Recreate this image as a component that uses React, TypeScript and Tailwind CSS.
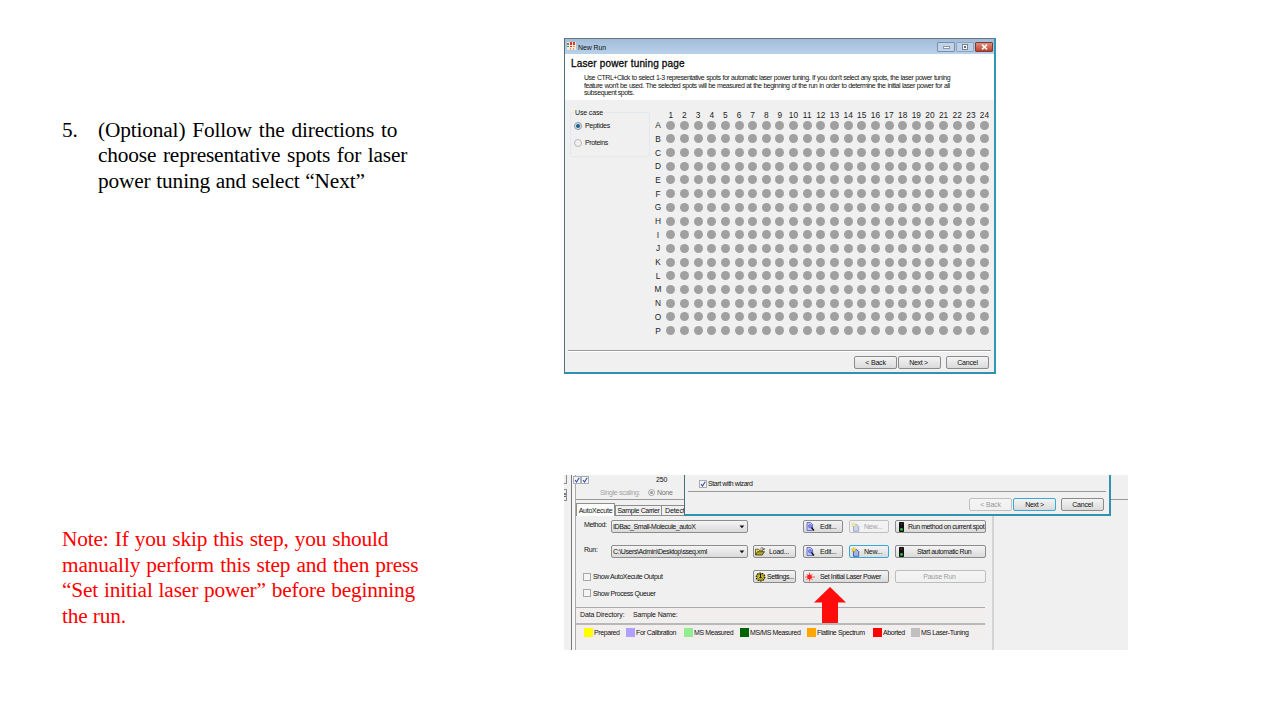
import type { ReactNode } from "react";

const columns = Array.from({ length: 24 }, (_, i) => i + 1);
const rows = "ABCDEFGHIJKLMNOP".split("");

function Line({ children, className = "" }: { children: ReactNode; className?: string }) {
  return <div className={`h-[25.6px] whitespace-nowrap leading-[25.6px] ${className}`}>{children}</div>;
}

function Btn({ children, className = "" }: { children?: ReactNode; className?: string }) {
  return (
    <div
      className={`flex h-[13px] shrink-0 items-center justify-center overflow-hidden whitespace-nowrap rounded-[2px] border bg-gradient-to-b from-[#f4f4f4] to-[#dadada] [&_svg]:shrink-0 ${className}`}
    >
      {children}
    </div>
  );
}

function AppIcon() {
  return (
    <svg width="9" height="8" viewBox="0 0 9 8" shapeRendering="crispEdges">
      <rect width="9" height="8" fill="#f3ead9" />
      <path d="M0 1h2v2H0zM0 4h2v1H0z" fill="#5e8a55" />
      <path d="M3 0h2v3H3zM6 0h2v3H6zM3 4h2v1H3z" fill="#d8362c" />
      <path d="M6 4h2v1H6zM3 6h1v2H3zM6 6h1v2H6z" fill="#d79c76" />
    </svg>
  );
}

function Magnifier() {
  return (
    <svg width="9" height="9" viewBox="0 0 9 9">
      <path d="M1 .5h3.600l2 2v6H1z" fill="#c3c8ff" stroke="#5a5ab8" strokeWidth=".8" />
      <circle cx="4.200" cy="4.200" r="1.700" fill="#8794f2" stroke="#4a55b8" strokeWidth=".6" />
      <path d="M5.400 5.500 8 8.500" stroke="#111" strokeWidth="1.400" />
    </svg>
  );
}

function NewDoc() {
  return (
    <svg width="9" height="10" viewBox="0 0 9 10">
      <path d="M2.500 2.500h3.200l2 2v4.800H2.500z" fill="#a3b3ea" stroke="#34449a" strokeWidth=".8" />
      <path d="m2.700 0 .7 1.700 1.900.3-1.400 1.200.4 1.900-1.600-1-1.600 1 .4-1.900L0 2l2-.3z" fill="#f3df27" stroke="#a89e28" strokeWidth=".3" />
    </svg>
  );
}

function Folder() {
  return (
    <svg width="10" height="9" viewBox="0 0 10 9">
      <path d="M.5 8V2.200h2.800l.8 1h3.400v1.600" fill="#e8dc50" stroke="#4b4715" strokeWidth=".8" />
      <path d="M.5 8 2.500 4.700h7L7.200 8z" fill="#b8a62c" stroke="#37340e" strokeWidth=".8" />
      <path d="M5.500 1.400c1.400-1.200 2.600-.6 3 .8M9.200 1v1.600H7.600" fill="none" stroke="#222" strokeWidth=".7" />
    </svg>
  );
}

function Gear() {
  return (
    <svg width="11" height="10" viewBox="0 0 11 10">
      <ellipse cx="5.500" cy="5" rx="4.300" ry="3.900" fill="#d5c72c" stroke="#23220f" strokeWidth="1.200" strokeDasharray="1.700 .8" />
      <circle cx="5.500" cy="5" r="2.900" fill="#d8cc30" stroke="#5b5518" strokeWidth=".6" />
      <path d="M5.500 1.800v3.600M4.200 5.700h2.600" stroke="#111" strokeWidth="1.100" />
    </svg>
  );
}

function Burst() {
  return (
    <svg width="11" height="10" viewBox="0 0 11 10">
      <path d="M4.500 .5v9M0 5h10M1.500 2l6 6M7.500 2l-6 6" stroke="#ff5c5c" strokeWidth="1" />
      <circle cx="4.500" cy="5" r="2.400" fill="#ff2020" />
    </svg>
  );
}

function Light() {
  return (
    <svg width="5" height="10" viewBox="0 0 5 10">
      <rect width="5" height="10" rx=".7" fill="#111" />
      <circle cx="2.500" cy="2" r="1" fill="#5a2a2a" />
      <circle cx="2.500" cy="7.400" r="1.400" fill="#27c43d" />
    </svg>
  );
}

function Tick() {
  return (
    <div className="flex size-[8px] shrink-0 items-center justify-center border border-[#a9adb2] bg-[#f5f8fb]">
      <svg width="6" height="6" viewBox="0 0 6 6">
        <path d="m1 3 1.500 2L5.200.8" fill="none" stroke="#3b54a5" strokeWidth="1.200" />
      </svg>
    </div>
  );
}

function EmptyBox() {
  return <div className="ml-[7px] size-[8px] shrink-0 border border-[#a8a8a8] bg-[#f4f4f4]" />;
}

function Arrow() {
  return (
    <svg width="6" height="4" viewBox="0 0 6 4">
      <path d="M.5.400h4.800L2.900 3.300z" fill="#111" />
    </svg>
  );
}

function Select({ children }: { children: ReactNode }) {
  return (
    <Btn className="w-[137px] justify-between! border-[#8d8d8d] pl-px pr-[2px]">
      <span>{children}</span>
      <Arrow />
    </Btn>
  );
}

function RunWindow() {
  return (
    <div className="flex h-[336px] w-[432px] flex-col border-b-2 border-l border-r-2 border-t border-b-[#2f93b0] border-l-[#53707c] border-r-[#3097b5] border-t-[#6b7178] bg-[#f0f0f0]">
      <div className="flex h-[15px] shrink-0 items-center bg-gradient-to-b from-[#a2bcd9] to-[#b9d1ea] pl-[2px] pr-px">
        <div className="-mt-[2px]">
          <AppIcon />
        </div>
        <span className="ml-[2px] mt-px tracking-[-0.1px]">New Run</span>
        <div className="ml-auto flex gap-[1px]">
          <div className="flex h-[10px] w-[18px] items-center justify-center rounded-[1px] border border-[#7890ac] bg-[#c0d3e8]">
            <div className="mt-[2px] h-[3px] w-[7px] border border-[#8a96a3] bg-white" />
          </div>
          <div className="flex h-[10px] w-[18px] items-center justify-center rounded-[1px] border border-[#8ea4be] bg-[#bdd1e7]">
            <div className="size-[6px] border border-[#74818f] bg-white p-px">
              <div className="size-[2px] bg-[#5e6b79]" />
            </div>
          </div>
          <div className="flex h-[10px] w-[18px] items-center justify-center rounded-[1px] border border-[#7b3a35] bg-gradient-to-b from-[#dd8d7c] to-[#c2402a]">
            <svg width="7" height="6" viewBox="0 0 7 6">
              <path d="m1 .7 5 4.600M6 .7 1 5.300" stroke="#fff" strokeWidth="1.600" />
            </svg>
          </div>
        </div>
      </div>
      <div className="h-[46px] shrink-0 bg-white pl-[6px] pt-[3px]">
        <div className="h-[14px] whitespace-nowrap text-[10px] leading-[14px] tracking-[0.16px] [-webkit-text-stroke:0.3px_#000]">Laser power tuning page</div>
        <div className="ml-[13px] mt-[3px] whitespace-nowrap leading-[7.5px]">
          <div className="tracking-[-0.48px] [word-spacing:0.5px]">Use CTRL+Click to select 1-3 representative spots for automatic laser power tuning. If you don't select any spots, the laser power tuning</div>
          <div className="tracking-[-0.48px] [word-spacing:0.5px]">feature won't be used. The selected spots will be measured at the beginning of the run in order to determine the initial laser power for all</div>
          <div className="tracking-[-0.4px]">subsequent spots.</div>
        </div>
      </div>
      <div className="flex h-[249px] shrink-0 pt-[7px]">
        <div className="ml-[5px] h-[49px] w-[80px] pt-[5px]">
          <div className="h-[45px] rounded-[2px] border border-[#e2e8ec]">
            <div className="-mt-[5px] ml-[3px] w-[30px] bg-[#f0f0f0] pl-px leading-[9px] tracking-[-0.15px]">Use case</div>
            <div className="ml-[3px] mt-[4px] flex h-[9px] items-center tracking-[-0.3px]">
              <div className="flex size-[8px] items-center justify-center rounded-full border border-[#8d969e] bg-[#dce8f0]">
                <div className="size-[4px] rounded-full bg-[#1c5c88]" />
              </div>
              <span className="ml-[3px]">Peptides</span>
            </div>
            <div className="ml-[3px] mt-[8px] flex h-[9px] items-center tracking-[-0.35px]">
              <div className="size-[8px] rounded-full border border-[#b3b7ba] bg-[#f0f0f0]" />
              <span className="ml-[3px]">Proteins</span>
            </div>
          </div>
        </div>
        <div className="ml-[2px] flex flex-col text-[8.3px] tracking-[0.1px] text-[#222]">
          <div className="ml-[12px] grid h-[11.4px] grid-cols-[repeat(24,13.65px)] text-center leading-[17px]">
            {columns.map((n) => (
              <span key={n}>{n}</span>
            ))}
          </div>
          {rows.map((r) => (
            <div key={r} className="grid h-[13.69px] shrink-0 grid-cols-[12px_repeat(24,13.65px)] items-center justify-items-center">
              <span className="leading-[10px]">{r}</span>
              {columns.map((n) => (
                <i key={n} className="size-[9px] rounded-full bg-[#a0a0a0]" />
              ))}
            </div>
          ))}
        </div>
      </div>
      <div className="mx-[3px] mt-px h-[2px] shrink-0 border-b border-t border-b-white border-t-[#9b9b9b]" />
      <div className="mt-[4px] flex justify-end pr-[5px]">
        <Btn className="w-[43px] border-[#8b8b8b] tracking-[-0.2px]">&lt; Back</Btn>
        <Btn className="ml-px w-[43px] border-[#8b8b8b] pr-[2px] tracking-[-0.3px]">Next &gt;</Btn>
        <Btn className="ml-[5px] w-[43px] border-[#8b8b8b] tracking-[-0.2px]">Cancel</Btn>
      </div>
    </div>
  );
}

const legend = [
  { label: "Prepared", color: "bg-[#ffff00]", width: "w-[42px]" },
  { label: "For Calibration", color: "bg-[#b0a0ff]", width: "w-[58px]" },
  { label: "MS Measured", color: "bg-[#90ee90]", width: "w-[56px]" },
  { label: "MS/MS Measured", color: "bg-[#006400]", width: "w-[67px]" },
  { label: "Flatline Spectrum", color: "bg-[#ffa500]", width: "w-[66px]" },
  { label: "Aborted", color: "bg-[#ff0000]", width: "w-[38px]" },
  { label: "MS Laser-Tuning", color: "bg-[#c0c0c0]", width: "w-[60px]" },
];

function ControlPanel() {
  return (
    <div className="relative flex h-[175px] w-[564px] overflow-hidden bg-[#f0f0f0]">
      <div className="flex w-[7px] shrink-0 flex-col">
        <div className="h-[9px] w-[3px] border-b border-r border-[#8c8c8c]" />
        <div className="mt-[5px] flex h-[12px] w-[3px] justify-end overflow-hidden border-y border-r border-[#8c8c8c] leading-[9px]">e</div>
      </div>
      <div className="w-[5px] shrink-0 border-l border-r border-l-[#777] border-r-[#aaa] bg-[#f6f6f6]" />
      <div className="flex w-[418px] shrink-0 flex-col border-r-2 border-[#d4d4d4]">
        <div className="flex h-[25px] shrink-0 flex-col border-b border-[#999]">
          <div className="flex h-[9px] items-center">
            <div className="-ml-[3px] flex">
              <Tick />
              <Tick />
            </div>
            <span className="ml-[67px] tracking-[-0.1px]">250</span>
          </div>
          <div className="mt-[4px] flex h-[9px] items-center pl-[24px] text-[#a5a5a5]">
            <span className="w-[39px] whitespace-nowrap tracking-[-0.35px]">Single scaling:</span>
            <div className="ml-[9px] flex size-[7px] items-center justify-center rounded-full border border-[#a5a5a5]">
              <div className="size-[3px] rounded-full bg-[#999]" />
            </div>
            <span className="ml-[2px] tracking-[-0.3px] text-[#777]">None</span>
          </div>
        </div>
        <div className="mt-[3px] flex h-[13px] shrink-0 items-end whitespace-nowrap">
          <div className="flex h-[13px] w-[39px] items-center justify-center border border-b-0 border-[#8e8e8e] bg-white tracking-[-0.25px]">AutoXecute</div>
          <div className="flex h-[11px] w-[47px] items-center justify-center border border-[#8e8e8e] tracking-[-0.35px]">Sample Carrier</div>
          <div className="flex h-[11px] w-[40px] items-center border border-l-0 border-[#8e8e8e] pl-[3px] tracking-[-0.1px]">Detection</div>
        </div>
        <div className="mt-[4px] flex h-[13px] shrink-0 items-center">
          <span className="-mt-[4px] ml-[8px] w-[27px] tracking-[-0.4px]">Method:</span>
          <Select>IDBac_Small-Molecule_autoX</Select>
          <Btn className="ml-[55px] w-[40px] justify-start! gap-[5px] border-[#8b8b8b] pl-[2px] tracking-[-0.2px]"><Magnifier />Edit...</Btn>
          <Btn className="ml-[6px] w-[40px] justify-start! gap-[4px] border-[#c0c0c0] from-[#f4f4f4]! to-[#f0f0f0]! pl-px tracking-[-0.2px] text-[#a2a2a2]"><span className="opacity-50"><NewDoc /></span>New...</Btn>
          <Btn className="ml-[6px] w-[91px] justify-start! gap-[4px] border-[#8b8b8b] pl-[3px]"><Light />Run method on current spot</Btn>
        </div>
        <div className="mt-[12px] flex h-[13px] shrink-0 items-center">
          <span className="-mt-[4px] ml-[8px] w-[27px] tracking-[-0.3px]">Run:</span>
          <Select>C:\Users\Admin\Desktop\sseq.xml</Select>
          <Btn className="ml-[5px] w-[43px] justify-start! gap-[4px] border-[#8b8b8b] pl-px tracking-[-0.2px]"><Folder />Load...</Btn>
          <Btn className="ml-[7px] w-[40px] justify-start! gap-[5px] border-[#8b8b8b] pl-[2px] tracking-[-0.2px]"><Magnifier />Edit...</Btn>
          <Btn className="ml-[6px] w-[40px] justify-start! gap-[4px] border-[#38a8d8] pl-px tracking-[-0.2px]"><NewDoc />New...</Btn>
          <Btn className="ml-[6px] w-[91px] justify-start! border-[#8b8b8b] pl-[3px]"><Light /><span className="ml-[13px]">Start automatic Run</span></Btn>
        </div>
        <div className="mt-[12px] flex h-[13px] shrink-0 items-center">
          <EmptyBox />
          <span className="ml-[2px] w-[160px]">Show AutoXecute Output</span>
          <Btn className="w-[43px] justify-start! gap-px border-[#8b8b8b] pl-px"><Gear />Settings...</Btn>
          <Btn className="ml-[7px] w-[86px] justify-start! gap-[4px] border-[#8b8b8b] pl-px"><Burst />Set Initial Laser Power</Btn>
          <Btn className="ml-[6px] w-[91px] border-[#bdbdbd] from-[#f4f4f4]! to-[#f0f0f0]! pr-[2px] tracking-[-0.25px] text-[#9d9d9d]">Pause Run</Btn>
        </div>
        <div className="mt-[5px] flex h-[10px] shrink-0 items-center">
          <EmptyBox />
          <span className="ml-[2px]">Show Process Queuer</span>
        </div>
        <div className="mr-[7px] mt-[9px] flex h-[14px] shrink-0 items-center border-t border-[#aaa] bg-[#f3eeee] pl-[4px]">
          <span className="w-[53px] tracking-[-0.15px]">Data Directory:</span>
          <span className="tracking-[-0.15px]">Sample Name:</span>
        </div>
        <div className="mr-[7px] mt-[2px] flex h-[18px] shrink-0 items-center border-t-2 border-[#b8b8b8] bg-[#f3eeee] pb-px pl-[8px]">
          {legend.map((l) => (
            <div key={l.label} className={`flex shrink-0 items-center whitespace-nowrap ${l.width}`}>
              <i className={`mr-px size-[9px] shrink-0 ${l.color}`} />
              {l.label}
            </div>
          ))}
        </div>
      </div>
      <div className="h-[25px] grow border-b border-[#999]" />
      <div className="absolute left-[120px] top-0 flex h-[41px] w-[427px] flex-col border-b-2 border-l border-r-2 border-b-[#2f93b0] border-l-[#456d80] border-r-[#3291ad] bg-[#f0f0f0]">
        <div className="ml-[14px] mt-[4px] flex h-[9px] shrink-0 items-center gap-[1px]"><Tick />Start with wizard</div>
        <div className="mx-[3px] mt-[3px] h-px shrink-0 bg-[#999]" />
        <div className="mt-[6px] flex justify-end pr-[5px]">
          <Btn className="w-[43px] border-[#c0c0c0] from-[#f4f4f4]! to-[#f0f0f0]! tracking-[-0.2px] text-[#999]">&lt; Back</Btn>
          <Btn className="ml-px w-[43px] border-[#38a8d8] tracking-[-0.3px]">Next &gt;</Btn>
          <Btn className="ml-[5px] w-[43px] border-[#8b8b8b] tracking-[-0.2px]">Cancel</Btn>
        </div>
      </div>
      <svg className="absolute left-[250px] top-[112px]" width="32" height="36" viewBox="0 0 32 36">
        <path d="M16 0 32 15.500H24V36H8V15.500H0z" fill="#ff0d0d" />
      </svg>
    </div>
  );
}

export default function App() {
  return (
    <main className="grid h-[720px] w-[1280px] grid-cols-[564px_1fr] grid-rows-[475px_245px] overflow-hidden bg-white font-['Liberation_Sans',sans-serif] text-[7px] leading-[9px] tracking-[-0.4px] text-[#111]">
      <section className="flex pl-[62px] pt-[117.6px] font-['Liberation_Serif',serif] text-[21.33px] tracking-[-0.15px] text-black">
        <Line className="w-[36px]">5.</Line>
        <div>
          <Line className="[word-spacing:1.8px]">(Optional) Follow the directions to</Line>
          <Line className="[word-spacing:1.4px]">choose representative spots for laser</Line>
          <Line className="[word-spacing:0.6px]">power tuning and select “Next”</Line>
        </div>
      </section>
      <section className="pt-[38px]">
        <RunWindow />
      </section>
      <section className="pl-[62px] pt-[52px] font-['Liberation_Serif',serif] text-[21.33px] tracking-[-0.15px] text-[#ff0000]">
        <Line className="[word-spacing:0.9px]">Note: If you skip this step, you should</Line>
        <Line className="[word-spacing:1px]">manually perform this step and then press</Line>
        <Line className="[word-spacing:0.7px]">“Set initial laser power” before beginning</Line>
        <Line>the run.</Line>
      </section>
      <section>
        <ControlPanel />
      </section>
    </main>
  );
}
